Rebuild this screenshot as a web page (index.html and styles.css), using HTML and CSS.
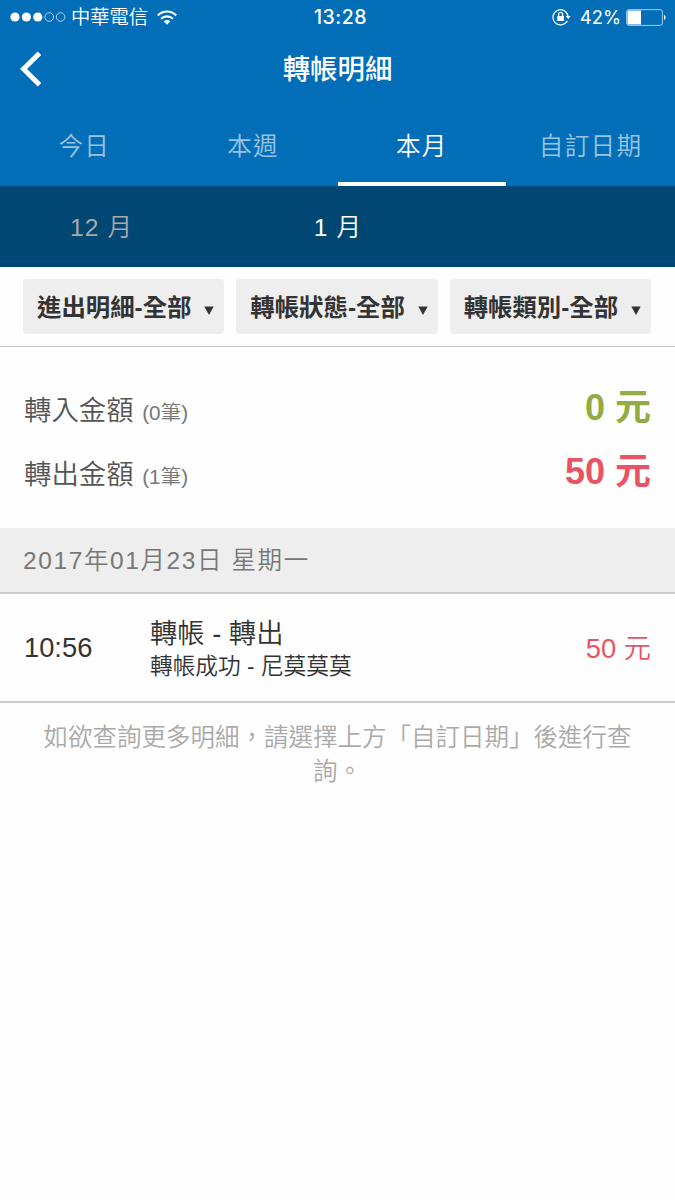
FILE: index.html
```html
<!DOCTYPE html>
<html lang="zh-Hant">
<head>
<meta charset="utf-8">
<title>轉帳明細</title>
<link rel="stylesheet" href="styles.css">
</head>
<body>
<header class="header">
  <div class="status">
    <div class="status-left">
      <svg class="signal" width="56" height="12" viewBox="0 0 56 12"><g fill="#fff"><circle cx="5" cy="6" r="4.6"/><circle cx="16.4" cy="6" r="4.6"/><circle cx="27.8" cy="6" r="4.6"/></g><g fill="none" stroke="#fff" stroke-width=".8" opacity=".85"><circle cx="39.2" cy="6" r="4.3"/><circle cx="50.6" cy="6" r="4.3"/></g></svg>
      <span class="carrier">中華電信</span>
      <svg class="wifi" width="20" height="15" viewBox="0 0 20 15"><g fill="none" stroke="#fff" stroke-width="2.1"><path d="M.8 5.5C5.8.2 14.2.2 19.2 5.5"/><path d="M4.1 8.8C7.4 5.5 12.6 5.5 15.9 8.8"/></g><path fill="#fff" d="M6.7 11.3Q10 8.6 13.3 11.3L10 14.7Z"/></svg>
    </div>
    <span class="clock">13:28</span>
    <div class="status-right">
      <svg class="lock" width="19" height="18" viewBox="0 0 19 18"><path fill="none" stroke="#fff" stroke-width="1.2" d="M15.3 12.8A7.6 7.6 0 1 1 16.1 8.5"/><path fill="#fff" d="M13.8 8h4.8l-2.4 3zM5.3 8h6.6v5H5.3z"/><path fill="none" stroke="#fff" stroke-width="1.3" d="M6.6 8.5V6.4a2 2 0 0 1 4 0v2.1"/></svg>
      <span class="percent">42%</span>
      <svg class="battery" width="40" height="17" viewBox="0 0 40 17"><rect x=".6" y=".6" width="35.8" height="15.8" rx="2.5" fill="none" stroke="#fff" stroke-width="1" opacity=".65"/><path fill="#fff" d="M1.5 2.8q0-1.3 1.3-1.3H15v14H2.8q-1.3 0-1.3-1.3z"/><path fill="#fff" d="M38 5.8q3.2 2.7 0 5.4z"/></svg>
    </div>
  </div>
  <div class="titlebar">
    <svg class="back" width="22" height="36" viewBox="0 0 22 36"><path d="M19.5 2.2L3.5 18L19.5 33.8" fill="none" stroke="#fff" stroke-width="5"/></svg>
    <h1 class="title">轉帳明細</h1>
  </div>
  <nav class="tabs">
    <a class="tab">今日</a><a class="tab">本週</a><a class="tab tab-active">本月</a><a class="tab">自訂日期</a>
  </nav>
</header>
<nav class="months"><a class="month">12 月</a><a class="month month-active">1 月</a></nav>
<section class="filters">
  <div class="filter"><span>進出明細-全部</span><svg class="caret" width="10" height="9" viewBox="0 0 10 9"><path d="M.3.5h9.4L5 9z"/></svg></div>
  <div class="filter"><span>轉帳狀態-全部</span><svg class="caret" width="10" height="9" viewBox="0 0 10 9"><path d="M.3.5h9.4L5 9z"/></svg></div>
  <div class="filter"><span>轉帳類別-全部</span><svg class="caret" width="10" height="9" viewBox="0 0 10 9"><path d="M.3.5h9.4L5 9z"/></svg></div>
</section>
<section class="summary">
  <div class="sum-row"><span class="sum-label">轉入金額 <small class="count">(0筆)</small></span><strong class="sum-amount in">0 元</strong></div>
  <div class="sum-row"><span class="sum-label">轉出金額 <small class="count">(1筆)</small></span><strong class="sum-amount out">50 元</strong></div>
</section>
<h2 class="date">2017年01月23日 星期一</h2>
<article class="record">
  <time class="time">10:56</time>
  <div class="detail"><div class="kind">轉帳 - 轉出</div><div class="result">轉帳成功 - 尼莫莫莫</div></div>
  <span class="amount out">50 元</span>
</article>
<p class="note">如欲查詢更多明細，請選擇上方「自訂日期」後進行查詢。</p>
</body>
</html>
```

FILE: styles.css
```css
* { box-sizing: border-box; }
body {
  margin: 0;
  background: #fefefe;
  color: #333;
  font-family: "Liberation Sans", "Noto Sans CJK TC", sans-serif;
  font-weight: 350;
}
svg { display: block; flex: none; }
.header { height: 186px; background: #036eb8; color: #fff; }
.status {
  display: grid;
  grid-template-columns: 1fr auto 1fr;
  align-items: center;
  height: 34px;
  padding: 0 9px 0 10px;
}
.status-left, .status-right { display: flex; align-items: center; }
.status-right { justify-content: flex-end; }
.carrier { margin-left: 5px; padding-top: 1px; font-size: 19.3px; line-height: 33px; }
.wifi { margin-left: 9px; }
.clock { padding-left: 5px; font: 500 19.5px/34px Inter, sans-serif; letter-spacing: .5px; }
.percent { margin: 1px 5px 0 9px; font: 400 18.4px/33px Inter, sans-serif; }
.titlebar {
  display: grid;
  grid-template-columns: 60px 1fr 60px;
  align-items: center;
  height: 70px;
}
.back { margin-left: 20px; }
.title { margin: 0; padding-top: 1px; font-size: 27.4px; font-weight: 500; line-height: 40px; text-align: center; }
.tabs { display: grid; grid-template-columns: repeat(4, 1fr); height: 82px; }
.tab {
  height: 82px;
  padding-top: 3px;
  border-bottom: 4px solid transparent;
  color: rgba(255, 255, 255, .6);
  font-size: 24.6px;
  letter-spacing: 1.3px;
  line-height: 79px;
  text-align: center;
}
.tab-active { border-color: #fff; color: #fff; }
.months {
  display: grid;
  grid-template-columns: 203px 270px;
  height: 81px;
  background: #004774;
}
.month { padding-top: 1px; color: #aaa; font-size: 24.6px; letter-spacing: 1.1px; line-height: 82px; text-align: center; }
.month-active { color: #fff; }
.filters {
  display: grid;
  grid-template-columns: repeat(3, 1fr);
  gap: 12px;
  height: 80px;
  padding: 12px 24px 12px 23px;
  border-bottom: 1.5px solid #ccc;
}
.filter {
  display: flex;
  align-items: center;
  justify-content: space-between;
  height: 55px;
  padding: 0 10px 0 14px;
  border-radius: 4px;
  background: #eee;
  font-size: 24.4px;
  font-weight: 700;
  line-height: 55px;
  white-space: nowrap;
}
.filter span { padding-top: 1px; }
.caret { margin-top: 7px; fill: #333; }
.summary { height: 181px; padding: 29px 24px 0; }
.sum-row { display: flex; align-items: baseline; justify-content: space-between; height: 64px; line-height: 63px; }
.sum-label { color: #555; font-size: 27.4px; }
.count { margin-left: 1px; color: #777; font-size: 20.7px; }
.sum-amount { font-size: 36px; }
.in { color: #93ab43; }
.out { color: #e95464; }
.date {
  height: 66px;
  margin: 0;
  padding: 1px 0 0 23px;
  border-bottom: 2px solid #ccc;
  background: #eee;
  color: #777;
  font-size: 24.5px;
  font-weight: 350;
  letter-spacing: 1.6px;
  line-height: 64px;
}
.record {
  display: grid;
  grid-template-columns: 126px 1fr auto;
  align-items: center;
  height: 109px;
  padding: 0 24px;
  border-bottom: 2px solid #ccc;
}
.time, .amount { font-size: 27.3px; }
.amount { padding-bottom: 4px; }
.detail { padding-top: 3px; }
.kind { font-size: 27.3px; line-height: 34px; }
.result { font-size: 22.7px; line-height: 31px; }
.note {
  margin: 18px 43px 0;
  color: #aaa;
  font-size: 24.5px;
  line-height: 34px;
  text-align: center;
}
```
